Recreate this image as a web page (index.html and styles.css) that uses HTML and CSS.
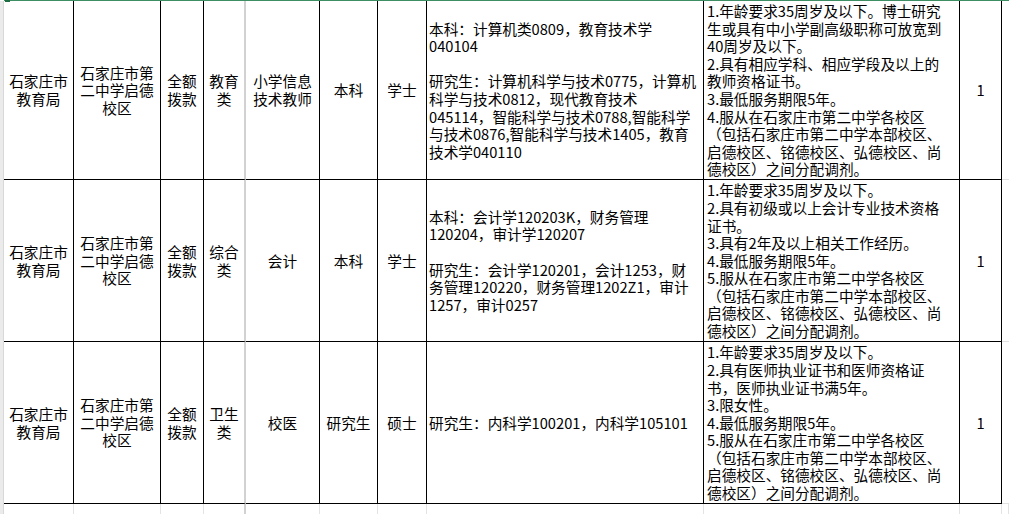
FILE: index.html
```html
<!DOCTYPE html>
<html lang="zh-CN">
<head>
<meta charset="utf-8">
<title>岗位表</title>
<link rel="stylesheet" href="styles.css">
</head>
<body>
<div class="topline"><span class="handle"></span></div>
<div class="sheet">
  <div class="strip"></div>

  <div class="c">石家庄市<br>教育局</div>
  <div class="c">石家庄市第<br>二中学启德<br>校区</div>
  <div class="c">全额<br>拨款</div>
  <div class="c fz">教育<br>类</div>
  <div class="c">小学信息<br>技术教师</div>
  <div class="c">本科</div>
  <div class="c">学士</div>
  <div class="c major">本科：计算机类0809，教育技术学<br>040104<br>&nbsp;<br>研究生：计算机科学与技术0775，计算机<br>科学与技术0812，现代教育技术<br>045114，智能科学与技术0788,智能科学<br>与技术0876,智能科学与技术1405，教育<br>技术学040110</div>
  <div class="c req">1.年龄要求35周岁及以下。博士研究<br>生或具有中小学副高级职称可放宽到<br>40周岁及以下。<br>2.具有相应学科、相应学段及以上的<br>教师资格证书。<br>3.最低服务期限5年。<br>4.服从在石家庄市第二中学各校区<br>（包括石家庄市第二中学本部校区、<br>启德校区、铭德校区、弘德校区、尚<br>德校区）之间分配调剂。</div>
  <div class="c">1</div>
  <div class="g"></div>

  <div class="c">石家庄市<br>教育局</div>
  <div class="c">石家庄市第<br>二中学启德<br>校区</div>
  <div class="c">全额<br>拨款</div>
  <div class="c fz">综合<br>类</div>
  <div class="c">会计</div>
  <div class="c">本科</div>
  <div class="c">学士</div>
  <div class="c major">本科：会计学120203K，财务管理<br>120204，审计学120207<br>&nbsp;<br>研究生：会计学120201，会计1253，财<br>务管理120220，财务管理1202Z1，审计<br>1257，审计0257</div>
  <div class="c req">1.年龄要求35周岁及以下。<br>2.具有初级或以上会计专业技术资格<br>证书。<br>3.具有2年及以上相关工作经历。<br>4.最低服务期限5年。<br>5.服从在石家庄市第二中学各校区<br>（包括石家庄市第二中学本部校区、<br>启德校区、铭德校区、弘德校区、尚<br>德校区）之间分配调剂。</div>
  <div class="c">1</div>
  <div class="g"></div>

  <div class="c">石家庄市<br>教育局</div>
  <div class="c">石家庄市第<br>二中学启德<br>校区</div>
  <div class="c">全额<br>拨款</div>
  <div class="c fz">卫生<br>类</div>
  <div class="c">校医</div>
  <div class="c">研究生</div>
  <div class="c">硕士</div>
  <div class="c major">研究生：内科学100201，内科学105101</div>
  <div class="c req">1.年龄要求35周岁及以下。<br>2.具有医师执业证书和医师资格证<br>书，医师执业证书满5年。<br>3.限女性。<br>4.最低服务期限5年。<br>5.服从在石家庄市第二中学各校区<br>（包括石家庄市第二中学本部校区、<br>启德校区、铭德校区、弘德校区、尚<br>德校区）之间分配调剂。</div>
  <div class="c">1</div>
  <div class="g"></div>

  <div class="e"></div>
  <div class="e"></div>
  <div class="e"></div>
  <div class="e fz"></div>
  <div class="e"></div>
  <div class="e"></div>
  <div class="e"></div>
  <div class="e"></div>
  <div class="e"></div>
  <div class="e"></div>
  <div class="e"></div>
</div>
</body>
</html>
```

FILE: styles.css
```css
* {
  box-sizing: border-box;
}

html, body {
  margin: 0;
  padding: 0;
  background: #ffffff;
  overflow: hidden;
}

body {
  width: 1009px;
  height: 514px;
  font-family: "Noto Sans CJK SC", "Noto Sans", sans-serif;
  font-size: 14.67px;
  line-height: 17.6px;
  color: #000000;
}

.topline {
  position: relative;
  height: 1px;
  margin-left: 4px;
  background: #3d8f63;
}

.handle {
  position: absolute;
  left: 1px;
  top: 0;
  width: 5px;
  height: 2px;
  background: #1f6e43;
}

.sheet {
  display: grid;
  grid-template-columns: 4px 70px 87px 43px 42px 74px 58px 49px 277px 256px 42px 1fr;
  grid-template-rows: 179px 162px 162px 10px;
  height: 513px;
}

.strip {
  grid-row: 1 / 5;
  background: #ebebeb;
  border-right: 1px solid #d8d8d8;
}

.c {
  display: flex;
  align-items: center;
  justify-content: center;
  text-align: center;
  white-space: nowrap;
  overflow: hidden;
  border-right: 1px solid #000000;
  border-bottom: 1px solid #000000;
}

.fz {
  border-right: 2px solid #d2d2d2;
}

.major {
  justify-content: flex-start;
  text-align: left;
  padding-left: 2px;
}

.req {
  justify-content: flex-start;
  text-align: left;
  padding-left: 3px;
}

.g {
  border-bottom: 1px solid #e1e1e1;
}

.e {
  border-right: 1px solid #e3e3e3;
}

.e.fz {
  border-right: 2px solid #d2d2d2;
}
```
